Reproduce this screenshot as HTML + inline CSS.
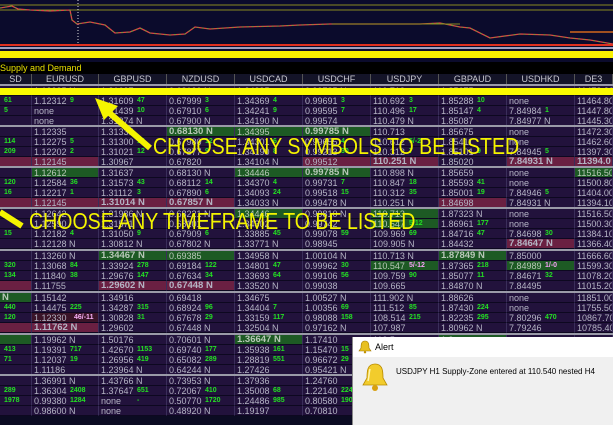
<!DOCTYPE html><html><head><meta charset="utf-8"><style>
*{margin:0;padding:0;box-sizing:border-box}
body{width:613px;height:425px;overflow:hidden;background:#000;font-family:"Liberation Sans",sans-serif;position:relative}
.chart{position:absolute;left:0;top:0;width:613px;height:62px;background:#0b0b2c}
.sd{position:absolute;left:0;top:63px;color:#e8e000;font-size:9px}
.hdr{position:absolute;top:74px;left:0;height:10px;display:flex}
.hdr div{height:10px;border-right:1px solid #555;background:#141428;color:#c8c8d0;font-size:9px;line-height:10px;text-align:center;overflow:hidden}
.g{position:absolute;left:0;width:613px;border-top:2px solid #9a9aa8}
.r{display:flex;height:10px}
.r div{position:relative;height:10px;background:#22123c;border-right:1px solid #3a2e5a;border-bottom:1px solid #0d0820;color:#b4b4c4;font-size:9px;line-height:10px;padding-left:2px;overflow:hidden;white-space:nowrap}
.r div b{position:absolute;left:38px;top:0;color:#22e022;font-size:7px}
.r div:first-child b{left:4px}
.r div.G{background:#1d5a24;color:#b8c8b8}
.r div.R{background:#6a2042}
.r div.k{font-weight:bold;font-size:9.5px}
.c0{width:32px}.c1{width:67px}.c{width:68px}.c9{width:38px}
.big{position:absolute;color:#f4f400;font-size:23px;line-height:23px;white-space:nowrap;transform:scaleX(0.85);transform-origin:0 0}
.alert{position:absolute;left:352px;top:337px;width:261px;height:88px;background:#f0f0f0;border-left:1px solid #888}
.alert .t{height:20px;background:#fff;font-size:9px;line-height:20px;padding-left:22px;color:#000}
.alert .m{position:absolute;left:43px;top:30px;font-size:8px;color:#000}
</style></head><body>
<div class="chart">
<svg width="613" height="62" style="position:absolute;left:0;top:0">
<line x1="0" y1="5" x2="613" y2="5" stroke="#8a8a20"/>
<line x1="0" y1="10" x2="613" y2="10" stroke="#8a8a20"/>
<line x1="78" y1="0" x2="78" y2="62" stroke="#ddd" stroke-dasharray="1,2"/>
<polyline fill="none" stroke="#d44" stroke-width="1.3" points="0,8 12,6 18,9 30,10 50,11 70,10 72,20 77,24 90,22 105,25 115,33 130,32 140,28 150,33 170,35 185,34 195,27 210,29 240,27 280,26 300,25 330,24 350,24 420,24 440,23 460,27 470,28 490,38 520,34 550,35 570,38 590,40 613,44"/>
<polyline fill="none" stroke="#3c3" stroke-width="0.6" stroke-dasharray="2,3" points="0,8 12,6 18,9 30,10 50,11 70,10 72,20 77,24 90,22 105,25 115,33 130,32 140,28 150,33 170,35 185,34 195,27 210,29 240,27 280,26 300,25 330,24 350,24 420,24 440,23 460,27 470,28 490,38 520,34 550,35 570,38 590,40 613,44"/>
<line x1="333" y1="24" x2="460" y2="24" stroke="#8a8a20"/>
<line x1="570" y1="32" x2="613" y2="32" stroke="#a05020" stroke-width="2"/>
<rect x="0" y="44" width="613" height="2" fill="#e03020"/>
<rect x="0" y="47" width="613" height="2" fill="#a0a0c0"/>
<rect x="0" y="51" width="613" height="7" fill="#f8f000"/>
</svg></div>
<div class="sd">Supply and Demand</div>
<div class="hdr"><div class="c0">SD</div><div class="c1">EURUSD</div><div class="c">GBPUSD</div><div class="c">NZDUSD</div><div class="c">USDCAD</div><div class="c">USDCHF</div><div class="c">USDJPY</div><div class="c">GBPAUD</div><div class="c">USDHKD</div><div class="c9">DE3</div></div>

<div class="g" style="top:84px">
<div class="r"><div class="c0"></div><div class="c1">1.12335 N</div><div class="c">1.31637</div><div class="c">0.68130 N</div><div class="c">1.34395</div><div class="c">0.99785 N</div><div class="c">110.713</div><div class="c">1.85675</div><div class="c">none</div><div class="c9">11472.30</div></div>
<div class="r"><div class="c0"><b>61</b></div><div class="c1">1.12312<b>9</b></div><div class="c">1.31609<b>47</b></div><div class="c">0.67999<b>3</b></div><div class="c">1.34369<b>4</b></div><div class="c">0.99691<b>3</b></div><div class="c">110.692<b>3</b></div><div class="c">1.85288<b>10</b></div><div class="c">none</div><div class="c9">11464.80</div></div>
<div class="r"><div class="c0"><b>5</b></div><div class="c1">none</div><div class="c">1.31439<b>10</b></div><div class="c">0.67910<b>6</b></div><div class="c">1.34241<b>9</b></div><div class="c">0.99595<b>7</b></div><div class="c">110.496<b>17</b></div><div class="c">1.85147<b>4</b></div><div class="c">7.84984<b>1</b></div><div class="c9">11447.80</div></div>
<div class="r"><div class="c0"></div><div class="c1">none</div><div class="c">1.31374 N</div><div class="c">0.67900 N</div><div class="c">1.34190 N</div><div class="c">0.99574</div><div class="c">110.479 N</div><div class="c">1.85087</div><div class="c">7.84977 N</div><div class="c9">11445.30</div></div>
</div>
<div style="position:absolute;left:0;top:88px;width:613px;height:7px;background:#fafa00"></div>

<div class="g" style="top:125px">
<div class="r"><div class="c0"></div><div class="c1">1.12335</div><div class="c">1.31335</div><div class="c G k">0.68130 N</div><div class="c G">1.34395</div><div class="c G k">0.99785 N</div><div class="c">110.713</div><div class="c">1.85675</div><div class="c">none</div><div class="c9">11472.30</div></div>
<div class="r"><div class="c0"><b>114</b></div><div class="c1">1.12275<b>5</b></div><div class="c">1.31300<b>16</b></div><div class="c">0.67980<b>12</b></div><div class="c">1.34301<b>6</b></div><div class="c">0.99655<b>4</b></div><div class="c">110.612<b>5/-2</b></div><div class="c">1.85411</div><div class="c">none</div><div class="c9">11462.60</div></div>
<div class="r"><div class="c0"><b>209</b></div><div class="c1">1.12202<b>2</b></div><div class="c">1.31021<b>12</b></div><div class="c">0.67877<b>9</b></div><div class="c">1.34190<b>8</b></div><div class="c">0.99213<b>30</b></div><div class="c">110.312<b>7</b></div><div class="c">1.85101<b>9</b></div><div class="c">7.84945<b>5</b></div><div class="c9">11397.30</div></div>
<div class="r"><div class="c0 R"></div><div class="c1 R">1.12145</div><div class="c">1.30967</div><div class="c">0.67820</div><div class="c">1.34104 N</div><div class="c R">0.99512</div><div class="c R k">110.251 N</div><div class="c">1.85020</div><div class="c R k">7.84931 N</div><div class="c9 R k">11394.0</div></div>
</div>

<div class="g" style="top:166px">
<div class="r"><div class="c0"></div><div class="c1 G">1.12612</div><div class="c">1.31637</div><div class="c">0.68130 N</div><div class="c G">1.34446</div><div class="c G k">0.99785 N</div><div class="c">110.898 N</div><div class="c">1.85659</div><div class="c">none</div><div class="c9 G">11516.50</div></div>
<div class="r"><div class="c0"><b>120</b></div><div class="c1">1.12584<b>36</b></div><div class="c">1.31573<b>43</b></div><div class="c">0.68112<b>14</b></div><div class="c">1.34370<b>4</b></div><div class="c">0.99731<b>7</b></div><div class="c">110.847<b>18</b></div><div class="c">1.85593<b>41</b></div><div class="c">none</div><div class="c9">11500.80</div></div>
<div class="r"><div class="c0"><b>16</b></div><div class="c1">1.12217<b>1</b></div><div class="c">1.31112<b>3</b></div><div class="c">0.67890<b>6</b></div><div class="c">1.34093<b>24</b></div><div class="c">0.99518<b>15</b></div><div class="c">110.312<b>35</b></div><div class="c">1.85001<b>19</b></div><div class="c">7.84946<b>5</b></div><div class="c9">11404.00</div></div>
<div class="r"><div class="c0 R"></div><div class="c1 R">1.12145</div><div class="c R k">1.31014 N</div><div class="c R k">0.67857 N</div><div class="c">1.34033 N</div><div class="c">0.99478 N</div><div class="c">110.251 N</div><div class="c R">1.84698</div><div class="c">7.84931 N</div><div class="c9">11394.10</div></div>
</div>

<div class="g" style="top:207px">
<div class="r"><div class="c0"></div><div class="c1">1.12642</div><div class="c">1.31986 N</div><div class="c">0.68221 N</div><div class="c G">1.34446</div><div class="c">0.99810 N</div><div class="c G">110.713</div><div class="c">1.87323 N</div><div class="c">none</div><div class="c9">11516.50</div></div>
<div class="r"><div class="c0"></div><div class="c1">1.12590</div><div class="c">1.31571</div><div class="c">0.68101</div><div class="c">1.34302</div><div class="c">0.99742</div><div class="c G">110.547<b>5/12</b></div><div class="c">1.86961<b>177</b></div><div class="c">none</div><div class="c9">11500.30</div></div>
<div class="r"><div class="c0"><b>15</b></div><div class="c1">1.12182<b>4</b></div><div class="c">1.31050<b>9</b></div><div class="c">0.67909<b>6</b></div><div class="c">1.33885<b>45</b></div><div class="c">0.99078<b>59</b></div><div class="c">109.969<b>69</b></div><div class="c">1.84716<b>47</b></div><div class="c">7.84698<b>30</b></div><div class="c9">11384.10</div></div>
<div class="r"><div class="c0"></div><div class="c1">1.12128 N</div><div class="c">1.30812 N</div><div class="c">0.67802 N</div><div class="c">1.33771 N</div><div class="c">0.98945</div><div class="c">109.905 N</div><div class="c">1.84432</div><div class="c R k">7.84647 N</div><div class="c9">11366.40</div></div>
</div>

<div class="g" style="top:249px">
<div class="r"><div class="c0"></div><div class="c1">1.13260 N</div><div class="c G k">1.34467 N</div><div class="c G">0.69385</div><div class="c">1.34958 N</div><div class="c">1.00104 N</div><div class="c">110.713 N</div><div class="c G k">1.87849 N</div><div class="c">7.85000</div><div class="c9">11666.60</div></div>
<div class="r"><div class="c0"><b>320</b></div><div class="c1">1.13068<b>84</b></div><div class="c">1.33924<b>278</b></div><div class="c">0.69184<b>122</b></div><div class="c">1.34801<b>47</b></div><div class="c">0.99962<b>30</b></div><div class="c G">110.547<b style="color:#f8a0f8">5/-12</b></div><div class="c">1.87365<b>218</b></div><div class="c G">7.84989<b style="color:#f8a0f8">1/-0</b></div><div class="c9">11599.30</div></div>
<div class="r"><div class="c0"><b>134</b></div><div class="c1">1.11840<b>38</b></div><div class="c">1.29676<b>147</b></div><div class="c">0.67634<b>34</b></div><div class="c">1.33693<b>64</b></div><div class="c">0.99106<b>56</b></div><div class="c">109.759<b>90</b></div><div class="c">1.85077<b>11</b></div><div class="c">7.84671<b>32</b></div><div class="c9">11078.20</div></div>
<div class="r"><div class="c0 R"></div><div class="c1">1.11755</div><div class="c R k">1.29602 N</div><div class="c R k">0.67448 N</div><div class="c">1.33520 N</div><div class="c">0.99038</div><div class="c">109.665</div><div class="c">1.84870 N</div><div class="c">7.84495</div><div class="c9">11015.20</div></div>
</div>

<div class="g" style="top:291px">
<div class="r"><div class="c0 G k">N</div><div class="c1">1.15142</div><div class="c">1.34916</div><div class="c">0.69418</div><div class="c">1.34675</div><div class="c">1.00527 N</div><div class="c">111.902 N</div><div class="c">1.88626</div><div class="c">none</div><div class="c9">11851.00</div></div>
<div class="r"><div class="c0"><b>440</b></div><div class="c1">1.14475<b>225</b></div><div class="c">1.34287<b>315</b></div><div class="c">0.68924<b>96</b></div><div class="c">1.34404<b>7</b></div><div class="c">1.00356<b>69</b></div><div class="c">111.512<b>85</b></div><div class="c">1.87430<b>224</b></div><div class="c">none</div><div class="c9">11755.50</div></div>
<div class="r"><div class="c0"><b>120</b></div><div class="c1" style="background:#3a1428">1.12330<b style="color:#f8b0f8;left:42px">46/-11</b></div><div class="c">1.30828<b>31</b></div><div class="c">0.67678<b>29</b></div><div class="c">1.33159<b>117</b></div><div class="c">0.98088<b>158</b></div><div class="c">108.514<b>215</b></div><div class="c">1.82235<b>295</b></div><div class="c">7.80296<b>470</b></div><div class="c9">10867.70</div></div>
<div class="r"><div class="c0 R"></div><div class="c1 R k">1.11762 N</div><div class="c">1.29602</div><div class="c">0.67448 N</div><div class="c">1.32504 N</div><div class="c">0.97162 N</div><div class="c">107.987</div><div class="c">1.80962 N</div><div class="c">7.79246</div><div class="c9">10785.40</div></div>
</div>

<div class="g" style="top:333px">
<div class="r"><div class="c0 G"></div><div class="c1">1.19962 N</div><div class="c">1.50176</div><div class="c">0.70601 N</div><div class="c G k">1.36647 N</div><div class="c">1.17410</div><div class="c">112.5</div><div class="c G">1.9</div><div class="c"></div><div class="c9"></div></div>
<div class="r"><div class="c0"><b>413</b></div><div class="c1">1.19391<b>717</b></div><div class="c">1.42670<b>1153</b></div><div class="c">0.69740<b>177</b></div><div class="c">1.35938<b>161</b></div><div class="c">1.15470<b>15</b></div><div class="c"></div><div class="c"></div><div class="c"></div><div class="c9"></div></div>
<div class="r"><div class="c0"><b>71</b></div><div class="c1">1.12037<b>19</b></div><div class="c">1.26956<b>419</b></div><div class="c">0.65082<b>289</b></div><div class="c">1.28819<b>551</b></div><div class="c">0.96672<b>29</b></div><div class="c"></div><div class="c"></div><div class="c"></div><div class="c9"></div></div>
<div class="r"><div class="c0"></div><div class="c1">1.11186</div><div class="c">1.23964 N</div><div class="c">0.64244 N</div><div class="c">1.27426</div><div class="c">0.95421 N</div><div class="c"></div><div class="c"></div><div class="c"></div><div class="c9"></div></div>
</div>

<div class="g" style="top:374px">
<div class="r"><div class="c0"></div><div class="c1">1.36991 N</div><div class="c">1.43766 N</div><div class="c">0.73953 N</div><div class="c">1.37936</div><div class="c">1.24760</div><div class="c"></div><div class="c"></div><div class="c"></div><div class="c9"></div></div>
<div class="r"><div class="c0"><b>289</b></div><div class="c1">1.36304<b>2408</b></div><div class="c">1.37647<b>651</b></div><div class="c">0.72067<b>410</b></div><div class="c">1.35008<b>68</b></div><div class="c">1.22140<b>224</b></div><div class="c"></div><div class="c"></div><div class="c"></div><div class="c9"></div></div>
<div class="r"><div class="c0"><b>1978</b></div><div class="c1">0.99380<b>1284</b></div><div class="c">none<b>-</b></div><div class="c">0.50770<b>1720</b></div><div class="c">1.24486<b>985</b></div><div class="c">0.80580<b>190</b></div><div class="c"></div><div class="c"></div><div class="c"></div><div class="c9"></div></div>
<div class="r"><div class="c0"></div><div class="c1">0.98600 N</div><div class="c">none</div><div class="c">0.48920 N</div><div class="c">1.19197</div><div class="c">0.70810</div><div class="c"></div><div class="c"></div><div class="c"></div><div class="c9"></div></div>
</div>
<div style="position:absolute;left:0;top:416px;width:613px;height:9px;background:#0b0b22"></div>

<svg width="613" height="425" style="position:absolute;left:0;top:0">
<line x1="150" y1="148" x2="106" y2="110" stroke="#f4f400" stroke-width="6"/>
<polygon points="95,98 118,106 104,120" fill="#f4f400"/>
<line x1="0" y1="212" x2="22" y2="226" stroke="#f4f400" stroke-width="6"/>
</svg>
<div class="big" style="left:153px;top:135px">CHOOSE ANY SYMBOLS TO BE LISTED</div>
<div class="big" style="left:29px;top:210px">CHOOSE ANY TIMEFRAME TO BE LISTED</div>

<div class="alert">
<div class="t">Alert</div>
<svg width="14" height="14" style="position:absolute;left:5px;top:3px"><path d="M7 1 C3 1 3 5 3 8 L1 11 L13 11 L11 8 C11 5 11 1 7 1Z" fill="#e8c020" stroke="#a07800" stroke-width="0.6"/><circle cx="7" cy="12.2" r="1.2" fill="#c09000"/></svg>
<svg width="28" height="30" style="position:absolute;left:8px;top:26px"><path d="M14 1 C6 1 6 9 6 15 L2 22 L26 22 L22 15 C22 9 22 1 14 1Z" fill="#f2cc2c" stroke="#b88a00" stroke-width="0.8"/><path d="M9 6 C8 10 8 14 7 18" stroke="#fff6b0" stroke-width="1.5" fill="none"/><circle cx="14" cy="25" r="3" fill="#d8a010"/></svg>
<div class="m">USDJPY H1 Supply-Zone entered at 110.540 nested H4</div>
</div>
</body></html>
